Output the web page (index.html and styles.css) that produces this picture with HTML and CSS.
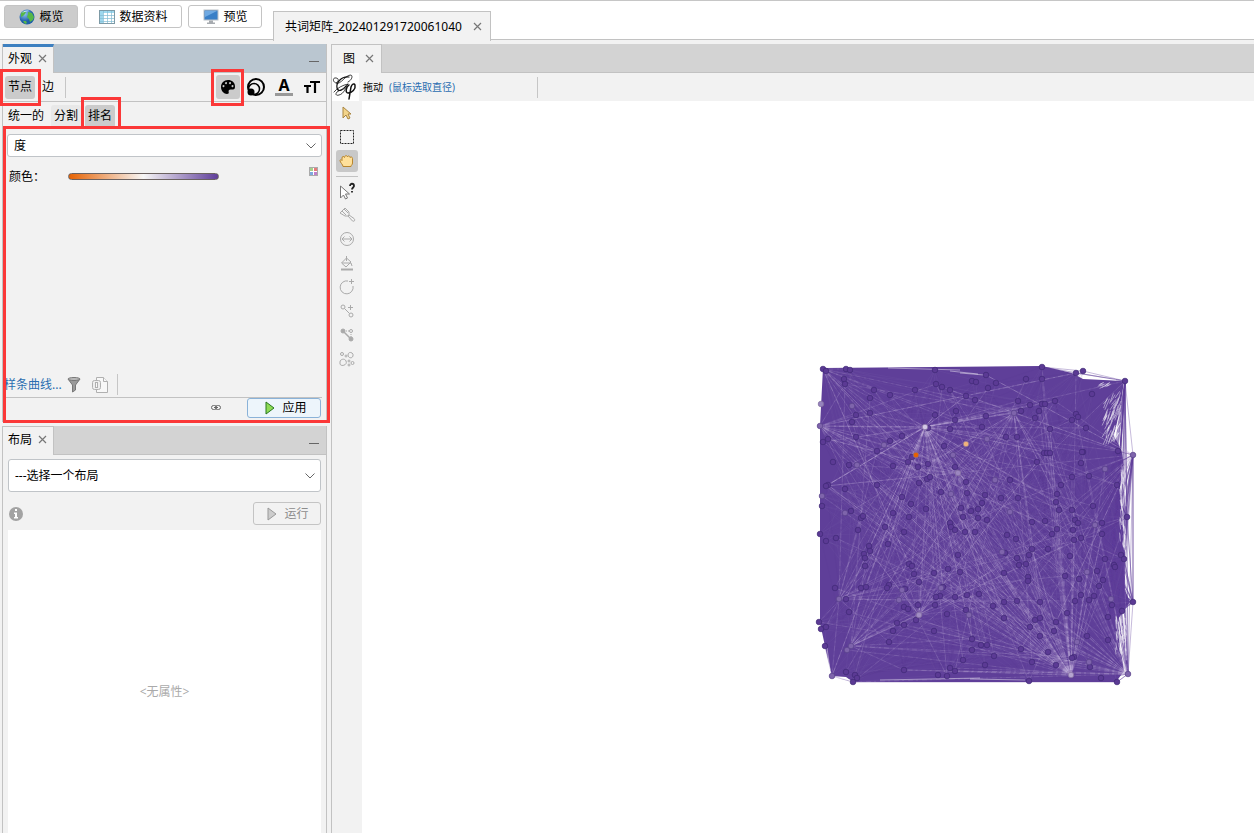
FILE: index.html
```html
<!DOCTYPE html>
<html lang="zh-CN">
<head>
	<meta charset="UTF-8">
	<title>Gephi</title>
	<link rel="stylesheet" href="styles.css">
</head>
<body>
<header class="topbar">
	<nav class="perspectives">
		<button class="persp active">
			<svg width="18" height="18" viewBox="0 0 18 18">
				<defs><radialGradient id="sea" cx="35%" cy="30%"><stop offset="0" stop-color="#8fc4ef"/><stop offset="1" stop-color="#1d5ea8"/></radialGradient></defs>
				<circle cx="9" cy="9" r="7.500" fill="url(#sea)"/>
				<path d="M3 5l3-2 2 1-1 2-2 2-2 1zM10 4l4 1 2 4-1 3-3 2-1-3-2-2 1-3zM5 13l3 0 1 2-2 1z" fill="#55b748"/>
				<path d="M4 5c2-3 6-3 8-2-3 0-6 1-8 2z" fill="#c9e6fa"/>
			</svg>概览</button>
		<button class="persp">
			<svg width="18" height="18" viewBox="0 0 18 18">
				<rect x="1.500" y="2.500" width="15" height="13" fill="#fff" stroke="#7d9aa6"/>
				<rect x="2" y="3" width="14" height="2" fill="#9ed8ee"/><rect x="2" y="5" width="3" height="10" fill="#9ed8ee"/>
				<path d="M2 7.500h14M2 10.500h14M2 13.500h14M5.500 3v12M9.500 3v12M13.500 3v12" stroke="#83bcd2" stroke-width=".7"/>
			</svg>数据资料</button>
		<button class="persp">
			<svg width="18" height="18" viewBox="0 0 18 18">
				<rect x="2" y="2" width="14" height="10" fill="#397fc7" stroke="#bcc2c8"/>
				<path d="M3 3h12L3 9z" fill="#6fa9e2"/><path d="M7 12.500h4v2h2v1.500H5v-1.500h2z" fill="#a7abb0"/>
			</svg>预览</button>
	</nav>
	<div class="project-tab">共词矩阵_202401291720061040
		<button class="close" aria-label="关闭"><svg width="9" height="9" viewBox="0 0 9 9"><path d="M1 1l7 7M8 1l-7 7"/></svg></button>
	</div>
</header>

<main class="workspace">
	<div class="side">
		<section class="panel appearance">
			<div class="tabbar focus">
				<div class="tab">外观<button class="close" aria-label="关闭"><svg width="9" height="9" viewBox="0 0 9 9"><path d="M1 1l7 7M8 1l-7 7"/></svg></button></div>
				<button class="minimize" aria-label="最小化"></button>
			</div>
			<div class="row elements">
				<button class="toggle active">节点</button>
				<button class="toggle">边</button>
				<span class="sep"></span>
				<div class="attrs">
					<button class="attr active" aria-label="颜色">
						<svg width="18" height="18" viewBox="0 0 18 18"><path fill-rule="evenodd" d="M9 2C5 2 2 5 2 9s3 7 6 7c1.500 0 2-1 1.700-2-.4-1.500.3-2.500 1.800-2.500H14c1.500 0 2-1 2-3C16 4.500 13 2 9 2zM5.500 8a1 1 0 1 0 0 .1zM8 5a1 1 0 1 0 0 .1zM12 5a1 1 0 1 0 0 .1zM14.500 8a1 1 0 1 0 0 .1z"/></svg>
					</button>
					<button class="attr" aria-label="大小">
						<svg width="20" height="20" viewBox="0 0 20 20" fill="none" stroke="#000" stroke-width="2"><circle cx="10" cy="10" r="8"/><circle cx="8" cy="12" r="5.500" stroke-width="1.500"/><circle cx="5" cy="15" r="3.500" fill="#000" stroke="none"/></svg>
					</button>
					<button class="attr" aria-label="标签颜色">
						<span class="letter-a">A</span>
					</button>
					<button class="attr" aria-label="标签大小">
						<svg width="20" height="20" viewBox="0 0 20 20" stroke="#000" stroke-width="2.200" fill="none"><path d="M8 5h10M13 4v12M2 9h7M5.500 9v7"/></svg>
					</button>
				</div>
			</div>
			<div class="row modes">
				<button class="toggle plain">统一的</button>
				<button class="toggle soft">分割</button>
				<button class="toggle active">排名</button>
			</div>
			<div class="settings">
				<div class="select">
					<select aria-label="属性"><option>度</option></select>
					<svg width="10" height="6" viewBox="0 0 10 6"><path d="M.5.5L5 5 9.500.5"/></svg>
				</div>
				<div class="color-row">
					<span class="color-label">颜色：</span>
					<div class="gradient"></div>
					<button class="swatch" aria-label="调色板"><i></i><i></i><i></i><i></i></button>
				</div>
			</div>
			<div class="tools">
				<a class="spline" href="#">样条曲线...</a>
				<svg width="14" height="16" viewBox="0 0 14 16"><path d="M1 2l4.500 6v7l3-2V8L13 2z" fill="#9a9a9a" stroke="#777"/><ellipse cx="7" cy="2" rx="6" ry="1.500" fill="#bbb" stroke="#777"/></svg>
				<svg width="18" height="18" viewBox="0 0 18 18" fill="#f8f8f8" stroke="#b0b0b0"><path d="M5.500 1.500h7l4 4v11h-11z"/><path d="M12.500 1.500v4h4"/><rect x="1.500" y="4.500" width="8" height="9" rx="2" fill="#eee"/><rect x="4.500" y="6.500" width="2" height="5"/></svg>
				<span class="sep"></span>
			</div>
			<div class="apply-row">
				<svg class="chain" width="10" height="6" viewBox="0 0 10 6" fill="none" stroke="#666"><rect x=".5" y=".5" width="5" height="4" rx="2"/><rect x="4.500" y=".5" width="5" height="4" rx="2"/><path d="M3 2.500h4"/></svg>
				<button class="action apply"><svg width="10" height="14" viewBox="0 0 10 14"><path d="M1 1l8 6-8 6z" fill="#8edb55" stroke="#27791f"/></svg>应用</button>
			</div>
		</section>

		<section class="panel layout">
			<div class="tabbar">
				<div class="tab">布局<button class="close" aria-label="关闭"><svg width="9" height="9" viewBox="0 0 9 9"><path d="M1 1l7 7M8 1l-7 7"/></svg></button></div>
				<button class="minimize" aria-label="最小化"></button>
			</div>
			<div class="layout-body">
				<div class="select tall">
					<select aria-label="布局"><option>---选择一个布局</option></select>
					<svg width="10" height="6" viewBox="0 0 10 6"><path d="M.5.5L5 5 9.500.5"/></svg>
				</div>
				<div class="run-row">
					<svg width="16" height="16" viewBox="0 0 16 16"><circle cx="8" cy="8" r="7" fill="#a3a3a3"/><path d="M7 3h2v2H7zM6 6.500h3V11h1v1.500H6V11h1V8H6z" fill="#fff"/></svg>
					<button class="action" disabled><svg width="10" height="14" viewBox="0 0 10 14"><path d="M1 1l8 6-8 6z" fill="#ccc" stroke="#999"/></svg>运行</button>
				</div>
				<div class="properties">&lt;无属性&gt;</div>
			</div>
		</section>
	</div>

	<section class="graph-panel">
		<div class="tabbar">
			<div class="tab">图<button class="close" aria-label="关闭"><svg width="9" height="9" viewBox="0 0 9 9"><path d="M1 1l7 7M8 1l-7 7"/></svg></button></div>
		</div>
		<div class="graph-head">
			<div class="logo">
				<svg width="26" height="28" viewBox="0 0 26 28" fill="none" stroke="#111" stroke-linecap="round">
					<path d="M4 10C0 9 1 4 4 5c3 0 3 4 0 5 5 2 9-8 15-8 2 1 1 5-3 7" stroke-width=".8"/>
					<path d="M17 4C9 3 4 10 5 15c1 4 6 3 9-2" stroke-width="1.200"/>
					<path d="M2 19c3-4 9-7 14-8-2 3-4 10-9 11-3 1-4-1-2-3 3-2 7-3 11-8" stroke-width=".8"/>
					<path d="M17 12c-3 2-4 8-1 8 4 0 8-4 7-8-1-2-3-1-4 2l-2 12" stroke-width="1.500"/>
				</svg>
			</div>
			<span class="mode">拖动</span>
			<span class="hint">(鼠标选取直径)</span>
			<span class="sep"></span>
		</div>
		<div class="graph-body">
			<div class="toolbox">
				<button class="tool" aria-label="选择"><svg width="18" height="18" viewBox="0 0 18 18"><path d="M5 3v11l3-3 2 4 2-1-2-4h3z" fill="#f3d48a" stroke="#a98540"/></svg></button>
				<button class="tool" aria-label="矩形选择"><svg width="18" height="18" viewBox="0 0 18 18"><rect x="2.500" y="2.500" width="13" height="13" fill="none" stroke="#222" stroke-dasharray="2 1"/></svg></button>
				<button class="tool active" aria-label="拖动"><svg width="18" height="18" viewBox="0 0 18 18"><path d="M5 14.500c0-2-3-4-3-6 0-1 1.500-1 2 0L4 6c0-2 2-2 2.500-.5C7 3 9 3 9.500 5c.5-2 2.500-1 2.500.5 1-1 2.500-.5 2.500 1V11c0 2-1.500 2-1.500 3.500z" fill="#ffe09a" stroke="#b8862f"/></svg></button>
				<hr>
				<button class="tool" aria-label="编辑"><svg width="18" height="18" viewBox="0 0 18 18"><path d="M2.500 4v12l3-3 2 4 2-1-2-4h4z" fill="#fff" stroke="#777"/><path d="M12 4c0-3 4-3 4 0 0 1.500-2 1.500-2 3.500M14 9v1.500" fill="none" stroke="#222" stroke-width="1.800"/></svg></button>
				<button class="tool" aria-label="画笔"><svg width="18" height="18" viewBox="0 0 18 18"><path d="M2 7l5-5 4 4v3l-1 1H7zM4 5l4 4M6 3l4 4M10 10l4.500 5c2 1 3-1 1.500-2.500L11 9"/></svg></button>
				<button class="tool" aria-label="大小笔"><svg width="18" height="18" viewBox="0 0 18 18"><circle cx="9" cy="9" r="6.500"/><path d="M4 9h10M6.500 6.500L4 9l2.500 2.500M11.500 6.500L14 9l-2.500 2.500"/></svg></button>
				<button class="tool" aria-label="填充"><svg width="18" height="18" viewBox="0 0 18 18"><path d="M8.500 2v5M8.500 4L3.500 9 8 13l5-5-4.500-4M4 9h9l1 3"/><path d="M3 15.500h12" stroke-width="2"/></svg></button>
				<button class="tool" aria-label="添加节点"><svg width="18" height="18" viewBox="0 0 18 18"><path d="M10 3a6.500 6.500 0 1 0 5 5M13.500 1v5M11 3.500h5"/></svg></button>
				<button class="tool" aria-label="添加边"><svg width="18" height="18" viewBox="0 0 18 18"><circle cx="5" cy="5" r="2"/><circle cx="13" cy="13" r="2"/><path d="M6.500 6.500l5 5M12.500 3v5M10 5.500h5"/></svg></button>
				<button class="tool" aria-label="最短路径"><svg width="18" height="18" viewBox="0 0 18 18"><circle cx="5" cy="5" r="2" fill="#aaa"/><circle cx="13" cy="13" r="2" fill="#aaa"/><circle cx="13" cy="5" r="1.500"/><path d="M6 6l6 6" stroke-width="1.500"/><path d="M8 5h3M13 8v3" stroke-dasharray="1 1"/></svg></button>
				<button class="tool" aria-label="热图"><svg width="18" height="18" viewBox="0 0 18 18"><circle cx="4" cy="4" r="1.500"/><circle cx="8" cy="6" r="1"/><path d="M10 5c0-4 6-3 5 1-1 3-5 2-5-1zM2 12c0-3 5-4 6-1 2 4-5 6-6 3z"/><circle cx="11" cy="11" r="1"/><circle cx="14.500" cy="13" r="1.500"/><circle cx="11" cy="15" r="1"/></svg></button>
			</div>
			<div class="canvas">
				<svg id="graph" width="335" height="335" viewBox="0 0 335 335"></svg>
			</div>
		</div>
	</section>
</main>

<div class="mark mark-node"></div>
<div class="mark mark-color"></div>
<div class="mark mark-rank"></div>
<div class="mark mark-settings"></div>

<script src="graph.js"></script>
</body>
</html>
```

FILE: styles.css
```css
* {
	margin: 0;
	padding: 0;
	box-sizing: border-box;
}

body {
	display: flex;
	flex-direction: column;
	height: 100vh;
	overflow: hidden;
	position: relative;
	background: #f2f2f2;
	color: #000;
	font: 12px/18px "Noto Sans", "Noto Sans CJK SC", sans-serif;
}
button, select {
	font: inherit;
	color: inherit;
	border: none;
	background: none;
}
svg {
	display: block;
	flex: none;
}

/* 顶部 */
.topbar {
	display: flex;
	height: 40px;
	border-top: 1px solid #c6c6c6;
	border-bottom: 1px solid #c2c2c2;
	background: #fff;
}
.perspectives {
	display: flex;
	gap: 6px;
	width: 273px;
	padding: 4px;
}
.persp {
	display: flex;
	align-items: center;
	justify-content: center;
	gap: 3px;
	width: 74px;
	height: 23px;
	border: 1px solid #c4c4c4;
	border-radius: 3px;
	background: #fff;
}
.persp:nth-child(2) {
	width: 98px;
}
.persp.active {
	background: #ccc;
}
.project-tab {
	display: flex;
	align-items: center;
	gap: 11px;
	height: 30px;
	margin-top: 10px;
	padding: 0 8px 0 11px;
	border: 1px solid #c2c2c2;
	border-bottom: none;
	background: #f2f2f2;
}
.close {
	display: flex;
}
.close svg {
	fill: none;
	stroke: #777;
	stroke-width: 1.2;
}

/* 工作区 */
.workspace {
	display: flex;
	flex: 1;
	gap: 4px;
	min-height: 0;
	padding: 4px 0 0 2px;
}
.side {
	display: flex;
	flex-direction: column;
	gap: 4px;
	width: 325px;
}
.panel {
	border: 1px solid #c2c2c2;
	border-top: none;
}
.tabbar {
	display: flex;
	align-items: center;
	justify-content: space-between;
	height: 29px;
	border-bottom: 1px solid #c2c2c2;
	background: #d3d3d3;
}
.tab {
	display: flex;
	align-items: center;
	gap: 6px;
	height: 29px;
	padding: 0 6px 2px 5px;
	border-top: 1px solid #c2c2c2;
	border-right: 1px solid #c2c2c2;
	background: #f2f2f2;
}
.tabbar.focus {
	background: #bac6d0;
}
.focus .tab {
	border-top: 3px solid #3d80c0;
}
.minimize {
	width: 10px;
	height: 8px;
	margin: 0 7px 0 0;
	border-bottom: 1px solid #666;
}

/* 外观 */
.appearance {
	height: 378px;
	display: flex;
	flex-direction: column;
}
.row {
	display: flex;
	align-items: center;
	height: 29px;
	padding-left: 2px;
}
.elements {
	border-bottom: 1px solid #c2c2c2;
}
.toggle {
	height: 23px;
	padding: 0 3px;
	border-radius: 3px;
}
.modes .toggle {
	padding-bottom: 1px;
}
.toggle + .toggle {
	margin-left: 4px;
}
.toggle.active, .attr.active {
	background: #cbcbcb;
}
.toggle.soft {
	background: #e8e8e8;
}
.sep {
	width: 1px;
	height: 21px;
	margin-left: 8px;
	background: #c6c6c6;
}
.attrs {
	display: flex;
	gap: 4px;
	margin-left: auto;
	padding-right: 2px;
}
.attr {
	display: flex;
	align-items: center;
	justify-content: center;
	width: 24px;
	height: 24px;
	border-radius: 3px;
}
.letter-a {
	width: 18px;
	height: 18px;
	border-bottom: 3px solid #999;
	font: bold 16px/15px "Noto Sans", sans-serif;
}
.settings {
	flex: 1;
	padding: 3px 4px;
}
.select {
	position: relative;
}
.select select {
	appearance: none;
	display: block;
	width: 100%;
	height: 23px;
	padding: 0 6px;
	border: 1px solid #c0c4c8;
	border-radius: 3px;
	background: #fff;
}
.select svg {
	position: absolute;
	right: 6px;
	top: 50%;
	margin-top: -3px;
	fill: none;
	stroke: #666;
	pointer-events: none;
}
.tall select {
	height: 33px;
}
.color-row {
	display: flex;
	align-items: center;
	height: 30px;
	margin-top: 4px;
	padding: 0 4px 0 2px;
}
.color-label {
	width: 59px;
	padding-top: 2px;
}
.gradient {
	width: 151px;
	height: 7px;
	border: 1px solid #6b6260;
	border-radius: 4px;
	background: linear-gradient(90deg, #e66101, #f7f7f7 50%, #5e3c99) border-box;
}
.swatch {
	display: grid;
	grid-template-columns: 3px 3px;
	gap: 1px;
	align-content: center;
	justify-content: center;
	width: 9px;
	height: 9px;
	margin: -10px 0 0 auto;
	border: 1px solid #aaa;
	background: #fff;
}
.swatch i {
	height: 3px;
	background: #a8d08a;
}
.swatch i:nth-child(2) {
	background: #e87a7a;
}
.swatch i:nth-child(3) {
	background: #7fa9dc;
}
.swatch i:nth-child(4) {
	background: #c07fca;
}
.tools {
	display: flex;
	align-items: center;
	height: 26px;
	margin-right: 4px;
	border-bottom: 1px solid #c2c2c2;
}
.tools svg {
	margin-right: 10px;
}
.tools .sep {
	margin-left: -2px;
}
.spline {
	width: 64px;
	padding-left: 1px;
	color: #2a6db0;
	text-decoration: none;
	white-space: nowrap;
}
.apply-row {
	display: flex;
	align-items: center;
	justify-content: flex-end;
	gap: 26px;
	height: 23px;
	padding: 0 5px 3px 0;
}
.action {
	display: flex;
	align-items: center;
	justify-content: center;
	gap: 7px;
	width: 68px;
	height: 23px;
	padding-left: 2px;
	border: 1px solid #c4c4c4;
	border-radius: 3px;
}
.action:disabled {
	color: #8c8c8c;
}
.action.apply {
	width: 74px;
	height: 20px;
	padding-left: 4px;
	border-color: #8ab2d8;
	background: #edf5fb;
}

/* 布局 */
.layout {
	display: flex;
	flex-direction: column;
	flex: 1;
	border-bottom: none;
}
.layout-body {
	display: flex;
	flex-direction: column;
	flex: 1;
	padding: 4px 5px 0;
}
.run-row {
	display: flex;
	align-items: center;
	justify-content: space-between;
	height: 38px;
	padding-top: 5px;
}
.properties {
	display: flex;
	align-items: center;
	justify-content: center;
	flex: 1;
	padding-top: 20px;
	background: #fff;
	color: #aaa;
}

/* 图 */
.graph-panel {
	display: flex;
	flex-direction: column;
	flex: 1;
	border-left: 1px solid #c2c2c2;
}
.graph-panel .tab {
	gap: 10px;
	padding: 0 7px 0 11px;
}
.graph-head {
	display: flex;
	align-items: center;
	height: 28px;
	font-size: 10px;
}
.logo {
	width: 27px;
	height: 28px;
	background: #fff;
}
.mode {
	margin-left: 4px;
}
.hint {
	width: 140px;
	margin-left: 6px;
	color: #2a6db0;
}
.graph-body {
	display: flex;
	flex: 1;
}
.toolbox {
	display: flex;
	flex-direction: column;
	align-items: center;
	gap: 2px;
	width: 30px;
	padding-top: 1px;
}
.tool {
	display: flex;
	align-items: center;
	justify-content: center;
	width: 22px;
	height: 22px;
	border-radius: 3px;
}
.tool.active {
	background: #c8c8c8;
}
.tool svg {
	fill: none;
	stroke: #aaa;
}
.toolbox hr {
	width: 22px;
	height: 1px;
	margin: 2px 0 1px;
	border: none;
	border-top: 1px solid #c2c2c2;
}
.canvas {
	position: relative;
	flex: 1;
	background: #fff;
}
#graph {
	position: absolute;
	left: 448px;
	top: 254px;
}

/* 红框标注 */
.mark {
	position: absolute;
	border: 3px solid #fb3838;
	pointer-events: none;
}
.mark-node {
	left: 0;
	top: 69px;
	width: 41px;
	height: 37px;
}
.mark-color {
	left: 211px;
	top: 69px;
	width: 33px;
	height: 37px;
}
.mark-rank {
	left: 81px;
	top: 97px;
	width: 40px;
	height: 32px;
}
.mark-settings {
	left: 3px;
	top: 126px;
	width: 327px;
	height: 297px;
}
```

FILE: graph.js
```js
let svg = document.getElementById("graph");

// 普通节点 x,y
let dark = `13,14 16,16 36,14 40,15 34,24 35,29 64,35 60,43 80,40 105,35 125,15 126,29 132,32 140,35 156,41 165,45
162,26 166,27 146,56 145,65 140,74 125,60 46,60 42,67 60,58 46,82 13,87 18,84 92,81 80,86 67,96 134,91 118,73 102,102
98,107 108,112 118,109 83,111 145,112 23,107 39,110 67,130 18,130 16,131 35,134 12,151 41,156 51,163 53,161 83,158
99,162 116,154 101,149 92,142 109,128 117,124 120,122 131,137 157,138 156,127 151,153 153,162 161,156 140,168 168,163
168,154 232,12 273,16 266,18 315,26 282,39 232,24 216,24 176,20 186,28 178,33 208,46 220,50 232,49 235,49 245,46
229,56 211,56 225,63 176,61 172,72 196,82 207,82 240,74 266,59 268,62 262,65 276,73 234,98 237,98 240,98 227,107
273,97 272,97 271,108 308,96 279,121 262,122 251,130 307,130 200,125 247,139 246,147 208,143 191,143 175,140 172,148
177,165 222,167 235,166 249,155 262,155 283,151 265,165 268,168 292,168 317,162 10,179 16,186 26,183 48,175 75,172
94,177 78,189 59,191 60,196 54,199 55,203 55,211 25,233 36,244 39,257 51,233 56,232 79,230 77,233 99,209 102,211
104,219 109,227 95,234 94,252 98,254 108,250 106,265 94,270 87,268 83,276 79,287 124,276 124,218 138,214 150,217
148,200 141,172 145,175 155,177 165,177 133,232 130,241 126,242 125,250 145,242 157,240 169,239 137,259 156,255
162,284 162,295 153,305 140,313 145,316 137,321 128,320 94,315 9,267 11,274 16,272 15,291 36,317 45,320 47,323 43,327
197,180 206,184 242,179 247,174 263,175 264,185 271,183 292,179 238,194 222,194 219,200 207,203 209,210 216,209
195,198 194,218 218,222 218,226 260,201 255,221 269,224 287,216 295,204 311,200 314,204 304,210 305,212 293,225
289,231 271,240 265,246 284,241 279,245 302,250 312,256 323,247 298,262 194,247 207,246 183,251 230,247 194,263
225,265 230,263 220,272 257,258 246,267 244,276 230,281 277,281 298,285 238,297 264,302 262,303 280,312 246,310
222,307 211,294 184,301 175,310 171,290 177,290 219,326 291,323 307,327`;
let mid = `10,71 42,51 74,90 143,100 47,110 12,141 35,158 141,139 204,58 177,84 323,100 295,114 185,125 200,157 285,170
29,244 92,235 89,245 131,233 159,260 37,295 41,291 22,321 192,197 277,217 301,244 267,287 279,307 318,319`;
let special = [
	[11, 49, "#9583bd"], [148, 118, "#9b86bf"], [109, 260, "#a18dc4"], [261, 320, "#b5a5d0"],
	[115, 72, "#d3c8e5"], [156, 89, "#f2b27b"], [106, 100, "#e66101"]
];

function parse(text) {
	return text.trim().split(/\s+/).map(p => p.split(",").map(Number));
}
let darkNodes = parse(dark);
let midNodes = parse(mid);
let all = darkNodes.concat(midNodes);

// 固定种子的随机数,每次画出的边一致
let seed = 7;
function rand() {
	seed = (seed * 16807) % 2147483647;
	return seed / 2147483647;
}
function pick(list) {
	return list[Math.floor(rand() * list.length)];
}
function line(a, b) {
	return `M${a[0]} ${a[1]}L${b[0]} ${b[1]}`;
}
function path(d, color, width, opacity, dash) {
	return `<path d="${d}" fill="none" stroke="${color}" stroke-width="${width}" stroke-opacity="${opacity}" stroke-dasharray="${dash || "none"}"/>`;
}

let html = `<path d="M13 13L232 11 262 18 273 24 314 26 310 55 304 80 312 97 314 112 310 132 312 160 315 200 315 235 320 247
	308 264 310 290 314 316 306 327 200 327 43 327 36 322 22 321 15 291 10 268 10 71z" fill="#5f3f99"/>`;

// 边缘稀疏的边
let fringe = "";
[[315, 26], [323, 100], [323, 247], [318, 319], [317, 162]].forEach(n => {
	for (let i = 0; i < 26; i++) {
		let b = pick(all.filter(p => p[0] > 285));
		fringe += line(n, b);
	}
});
fringe += "M315 26L323 100L323 247L318 319L307 327L43 327L22 321L15 291M13 14L232 12L273 16L315 26M232 12L315 26M266 18L315 26";
html += path(fringe, "#5f3f99", .6, .6);

// 内部纹理,每条边逐条叠加
for (let i = 0; i < 900; i++) {
	html += path(line(pick(all), pick(all)), i % 3 ? "#8067ae" : "#54358c", .5, .25);
}

// 高度数节点发出的浅色边
[[115, 72, 80], [148, 118, 26], [10, 71, 24], [204, 58, 22], [261, 320, 70], [318, 319, 35], [29, 244, 16],
	[109, 260, 20], [41, 291, 18], [323, 100, 18], [13, 14, 12]].forEach(h => {
	let d = "";
	for (let i = 0; i < h[2]; i++) {
		d += line(h, pick(all));
	}
	html += path(d, "#b5a3d2", .5, .3);
	html += path(d, "#c9bade", .5, .25, "2 3 5 4");
});

// 右侧露出的白色缝隙
let gaps = "";
for (let i = 0; i < 60; i++) {
	let x = 296 + rand() * 15;
	let y = 36 + rand() * 45;
	gaps += line([x, y], [x - 2 - rand() * 3, y + 5 + rand() * 7]);
}
for (let i = 0; i < 12; i++) {
	let x = 287 + rand() * 10;
	let y = 29 + rand() * 6;
	gaps += line([x, y], [x + 4, y - 2]);
}
for (let i = 0; i < 36; i++) {
	let x = 309 + rand() * 7;
	let y = 110 + rand() * 85;
	gaps += line([x, y], [x + 1, y + 4 + rand() * 10]);
}
for (let i = 0; i < 44; i++) {
	let x = 305 + rand() * 11;
	let y = 260 + rand() * 35;
	gaps += line([x, y], [x + 1, y + 3 + rand() * 9]);
}
gaps += "M78 13L150 15M140 16L168 19M150 18L174 20M70 325L170 323M160 324L215 325M17 293L20 315M274 22L306 25M24 322L40 325";
html += path(gaps, "#fff", .6, .75);

function circle(n, fill, stroke) {
	return `<circle cx="${n[0]}" cy="${n[1]}" r="2.800" fill="${fill}" stroke="${stroke}" stroke-width=".7"/>`;
}
darkNodes.forEach(n => html += circle(n, "#5b3a94", "#3f2876"));
midNodes.forEach(n => html += circle(n, "#7e64ab", "#58418a"));
special.forEach(n => html += circle(n, n[2], "#806a9c"));

svg.innerHTML = html;
```
